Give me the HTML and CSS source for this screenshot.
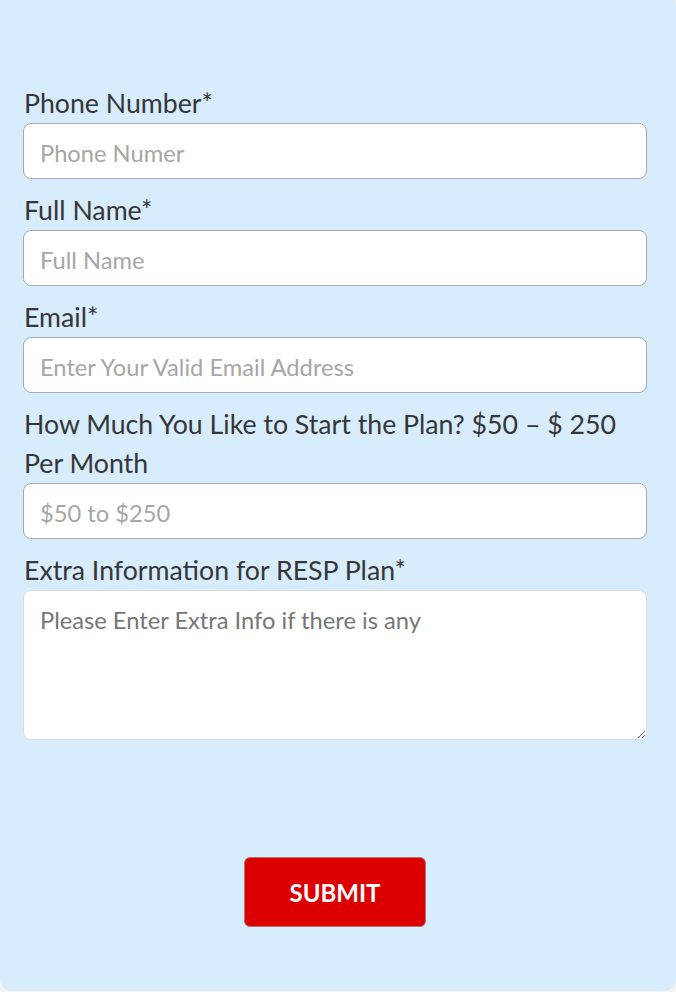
FILE: index.html
```html
<!DOCTYPE html>
<html lang="en">
<head>
<meta charset="utf-8">
<title>RESP Plan Form</title>
<link rel="stylesheet" href="styles.css">
</head>
<body>
<form class="card">
  <div class="fields">
    <label class="field">
      <span class="label">Phone Number*</span>
      <input class="input" type="tel" placeholder="Phone Numer">
    </label>
    <label class="field">
      <span class="label">Full Name*</span>
      <input class="input" type="text" placeholder="Full Name">
    </label>
    <label class="field">
      <span class="label">Email*</span>
      <input class="input" type="email" placeholder="Enter Your Valid Email Address">
    </label>
    <label class="field">
      <span class="label">How Much You Like to Start the Plan? $50 – $ 250 Per Month</span>
      <input class="input" type="text" placeholder="$50 to $250">
    </label>
    <label class="field">
      <span class="label">Extra Information for RESP Plan*</span>
      <textarea class="textarea" placeholder="Please Enter Extra Info if there is any"></textarea>
    </label>
  </div>
  <div class="actions">
    <button class="submit" type="button">SUBMIT</button>
  </div>
</form>
</body>
</html>
```
FILE: styles.css
```css
html, body {
  margin: 0;
  padding: 0;
  background: #f3f3f3;
}

body {
  font-family: Lato, "Open Sans", sans-serif;
  color: #333333;
}

.card {
  box-sizing: border-box;
  width: 676px;
  height: 997px;
  margin-top: -6px;
  padding: 90px 29px 0 23px;
  background: #d7ecfd;
  border-radius: 0 12px 12px 12px;
  display: flex;
  flex-direction: column;
}

.fields {
  display: flex;
  flex-direction: column;
  gap: 12px;
}

.field {
  display: flex;
  flex-direction: column;
}

.label {
  font-size: 26.7px;
  line-height: 39px;
  padding-left: 1px;
  color: #363636;
}

.input,
.textarea {
  box-sizing: border-box;
  width: 100%;
  margin: 0;
  font-family: Lato, "Open Sans", sans-serif;
  font-size: 23.7px;
  color: #333;
  background: #ffffff;
  border-radius: 8px;
  outline: none;
}

.input {
  height: 56px;
  padding: 3px 16px 0;
  border: 1px solid #a9a9a9;
}

.input::placeholder {
  color: #a6a6a6;
}

.textarea {
  height: 150px;
  padding: 14px 16px;
  border: 1px solid #dedede;
  resize: vertical;
  line-height: 30px;
}

.textarea::placeholder {
  color: #767676;
}

.actions {
  display: flex;
  justify-content: center;
  padding-top: 117px;
}

.submit {
  width: 182px;
  height: 70px;
  background: #dc0000;
  color: #ffffff;
  border: 1px solid #b87070;
  border-radius: 6px;
  font-family: Lato, "Open Sans", sans-serif;
  font-weight: 700;
  font-size: 24px;
  cursor: pointer;
}
```
